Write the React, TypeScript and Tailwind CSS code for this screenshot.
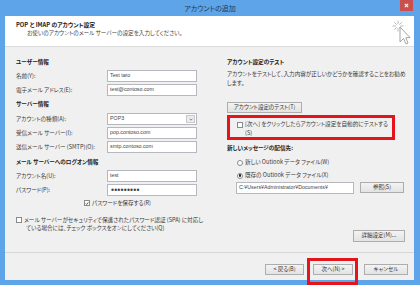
import type { ReactNode } from "react";

// "アカウントの追加" dialog (Outlook, POP/IMAP settings page).

function Btn({ children, className = "" }: { children: ReactNode; className?: string }) {
  return (
    <button
      type="button"
      className={`flex h-[11px] shrink-0 items-center justify-center border border-[#adadad] bg-gradient-to-b from-[#f3f3f3] to-[#e3e3e3] text-[5.5px] leading-none whitespace-nowrap text-[#333] ${className}`}
    >
      {children}
    </button>
  );
}

function Box({ children, className = "" }: { children?: ReactNode; className?: string }) {
  return (
    <div
      className={`flex h-[12px] items-center border border-[#b5b8bf] bg-white pl-[2px] font-['Liberation_Sans','Noto_Sans_CJK_JP',sans-serif] text-[5.3px] text-[#444] ${className}`}
    >
      {children}
    </div>
  );
}

function Row({ label, children }: { label: string; children: ReactNode }) {
  return (
    <div className="flex h-[12px] items-center">
      <span className="w-[91px] shrink-0 whitespace-nowrap text-[#3a3a3a]">{label}</span>
      <div className="w-[90px]">{children}</div>
    </div>
  );
}

function Check({ checked = false }: { checked?: boolean }) {
  return (
    <span className="flex h-[6px] w-[6px] shrink-0 items-center justify-center border border-[#8a8a8a] bg-white">
      {checked && (
        <svg viewBox="0 0 6 6" className="h-[5px] w-[5px]">
          <path d="M1 3 L2.5 4.5 L5 1.2" fill="none" stroke="#222" strokeWidth="1.1" />
        </svg>
      )}
    </span>
  );
}

function Radio({ checked = false }: { checked?: boolean }) {
  return (
    <span className="flex h-[6px] w-[6px] shrink-0 items-center justify-center rounded-full border border-[#8a8a8a] bg-white">
      {checked && <span className="h-[2.5px] w-[2.5px] rounded-full bg-[#222]" />}
    </span>
  );
}

function Heading({ children, className = "" }: { children: ReactNode; className?: string }) {
  return <div className={`font-bold leading-[10px] whitespace-nowrap text-[#222] ${className}`}>{children}</div>;
}

export default function App() {
  return (
    <div className="relative flex h-[285px] w-[420px] flex-col overflow-hidden bg-[#5ea4e8] font-['Noto_Sans_CJK_JP','Noto_Sans',sans-serif] text-[5.6px] text-[#333] [font-feature-settings:'palt']">
      {/* title bar */}
      <div className="relative flex h-[16px] shrink-0 items-center justify-center">
        <span className="text-[7px] text-[#1f3954]">アカウントの追加</span>
        <button
          type="button"
          className="absolute right-[7px] top-0 flex h-[11px] w-[13px] items-center justify-center bg-[#c9504c]"
        >
          <svg viewBox="0 0 6 6" className="h-[5px] w-[5px]">
            <path d="M1 1 L5 5 M5 1 L1 5" stroke="#fff" strokeWidth="1.3" />
          </svg>
        </button>
      </div>

      <div className="mb-[5px] ml-[5px] mr-[6px] flex flex-1 flex-col bg-[#f0f0f0]">
        <header className="h-[31px] shrink-0 border-b border-[#dcdcdc] bg-white pl-[11px] pt-[5px]">
          <div className="text-[5.8px] font-bold leading-[8px] text-[#222]">POP と IMAP のアカウント設定</div>
          <div className="pl-[11px] leading-[8px] text-[#444]">
            お使いのアカウントのメール サーバーの設定を入力してください。
          </div>
        </header>

        <div className="flex flex-1 gap-[30px] pb-[10px] pl-[11px] pt-[10px]">
          {/* left column */}
          <div className="flex w-[181px] shrink-0 flex-col">
            <Heading>ユーザー情報</Heading>
            <div className="mt-[3px] flex flex-col gap-[2px]">
              <Row label="名前(Y):">
                <Box>Test taro</Box>
              </Row>
              <Row label="電子メール アドレス(E):">
                <Box>test@contoso.com</Box>
              </Row>
            </div>

            <Heading className="mt-[3px]">サーバー情報</Heading>
            <div className="mt-[4px] flex flex-col gap-[2px]">
              <Row label="アカウントの種類(A):">
                <Box className="pr-[1px]">
                  POP3
                  <span className="ml-auto flex h-[8px] w-[9px] items-center justify-center border border-[#c9c9c9] bg-[#ececec]">
                    <svg viewBox="0 0 6 4" className="h-[3px] w-[4px]">
                      <path d="M0.8 0.8 L3 3 L5.2 0.8" fill="none" stroke="#555" strokeWidth="1" />
                    </svg>
                  </span>
                </Box>
              </Row>
              <Row label="受信メール サーバー(I):">
                <Box>pop.contoso.com</Box>
              </Row>
              <Row label="送信メール サーバー (SMTP)(O):">
                <Box>smtp.contoso.com</Box>
              </Row>
            </div>

            <Heading className="mt-[4px]">メール サーバーへのログオン情報</Heading>
            <div className="mt-[3px] flex flex-col gap-[2px]">
              <Row label="アカウント名(U):">
                <Box>test</Box>
              </Row>
              <Row label="パスワード(P):">
                <Box className="pl-[3px] text-[8.5px] leading-none tracking-[0.2px] text-[#333]">
                  •••••••••
                </Box>
              </Row>
            </div>

            <label className="mt-[3px] flex h-[8px] items-center gap-[2px] whitespace-nowrap pl-[68px] text-[#3a3a3a]">
              <Check checked />
              パスワードを保存する(R)
            </label>

            <label className="mt-[9px] flex gap-[2px] whitespace-nowrap text-[#3a3a3a]">
              <span className="mt-[1px]">
                <Check />
              </span>
              <span className="leading-[8px]">
                メール サーバーがセキュリティで保護されたパスワード認証 (SPA) に対応し
                <br />
                <span className="pl-[2px]">ている場合には、チェック ボックスをオンにしてください(Q)</span>
              </span>
            </label>
          </div>

          {/* right column */}
          <div className="flex w-[178px] shrink-0 flex-col">
            <Heading>アカウント設定のテスト</Heading>
            <p className="mt-[3px] whitespace-nowrap leading-[9px] text-[#3a3a3a]">
              アカウントをテストして、入力内容が正しいかどうかを確認することをお勧め
              <br />
              します。
            </p>
            <Btn className="mt-[14px] w-[75px]">アカウント設定のテスト(T)</Btn>

            <div className="mt-[2px] flex h-[25px] w-[168px] gap-[2px] border-[3px] border-[#e3141b] pl-[7px] pt-[2px]">
              <span className="mt-[1.5px]">
                <Check />
              </span>
              <span className="whitespace-nowrap leading-[8.5px] text-[#3a3a3a]">
                [次へ] をクリックしたらアカウント設定を自動的にテストする
                <br />
                (S)
              </span>
            </div>

            <Heading className="mt-[3px]">新しいメッセージの配信先:</Heading>
            <div className="mt-[3px] flex h-[13px] items-center gap-[2px] whitespace-nowrap pl-[10px] text-[#3a3a3a]">
              <Radio />
              新しい Outlook データ ファイル(W)
            </div>
            <div className="flex h-[13px] items-center gap-[2px] whitespace-nowrap pl-[10px] text-[#3a3a3a]">
              <Radio checked />
              既存の Outlook データ ファイル(X)
            </div>
            <div className="flex h-[11px] items-center pl-[9px]">
              <Box className="h-[11px] w-[118px] overflow-hidden whitespace-nowrap">
                C:¥Users¥Administrator¥Documents¥
              </Box>
              <Btn className="ml-[6px] w-[44px]">参照(S)</Btn>
            </div>

            <Btn className="mt-auto h-[12px] w-[52px] self-end">詳細設定(M)...</Btn>
          </div>
        </div>

        <footer className="flex h-[28px] shrink-0 justify-end gap-[9px] border-t border-[#d6d6d6] pr-[6px] pt-[11px]">
          <Btn className="w-[39px]">&lt; 戻る(B)</Btn>
          <div className="relative mr-[2px]">
            <Btn className="w-[40px]">次へ(N) &gt;</Btn>
            <span className="absolute -bottom-[5px] -left-[6px] -right-[5px] -top-[6px] border-[3px] border-[#e3141b]" />
          </div>
          <Btn className="w-[44px]">キャンセル</Btn>
        </footer>
      </div>

      {/* busy cursor over the header */}
      <svg viewBox="0 0 22 28" className="absolute left-[390px] top-[18px] h-[28px] w-[22px]">
        <g stroke="#a0a0a0" strokeWidth="0.7">
          <path d="M8 2.5 V6 M8 10 V13.5 M2.5 8 H6 M10 8 H13.5 M4.1 4.1 L6.6 6.6 M9.4 9.4 L11.9 11.9 M11.9 4.1 L9.4 6.6 M6.6 9.4 L4.1 11.9" />
        </g>
        <path
          d="M10 9 L10 24 L13.5 20.5 L16 26 L18 25 L15.8 19.8 L20 19.5 Z"
          fill="#fff"
          stroke="#808080"
          strokeWidth="0.7"
        />
      </svg>
    </div>
  );
}
